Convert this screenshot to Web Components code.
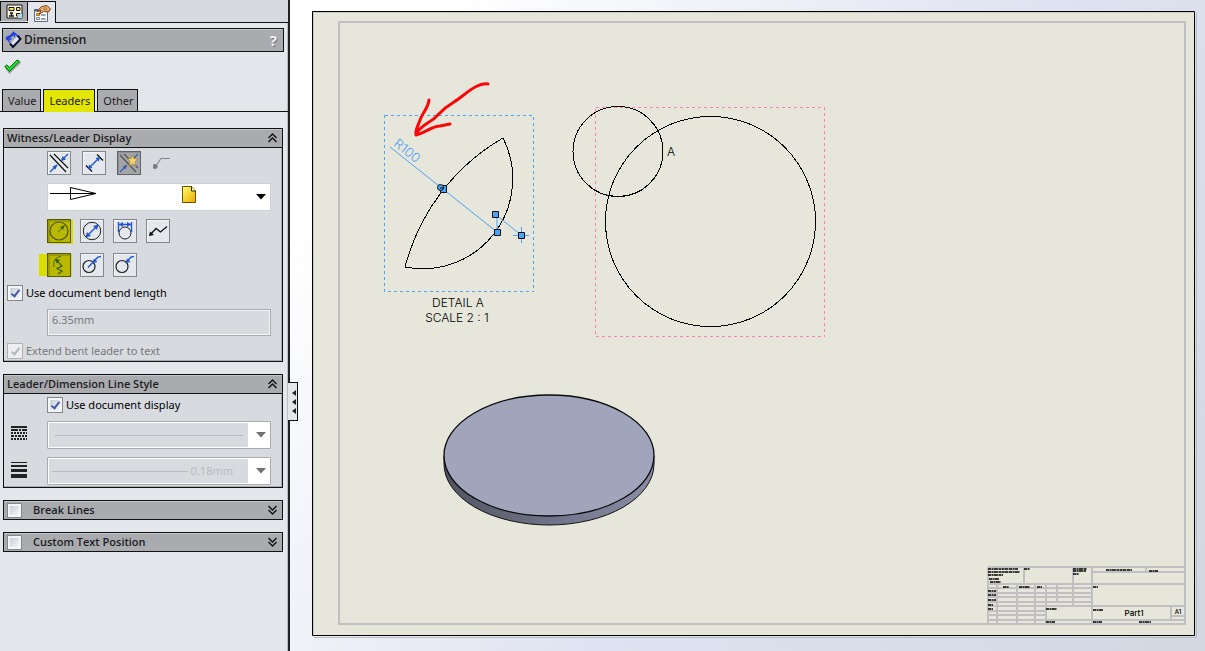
<!DOCTYPE html>
<html lang="en">
<head>
<meta charset="utf-8">
<title>Dimension</title>
<style>
  html, body { margin: 0; height: 100%; }
  body { font: 11px/16px "Noto Sans", "Open Sans", sans-serif; color: #000; }
</style>
</head>
<body>
<cad-app></cad-app>
<script>
const define = (name, html, setup) => {
  const tpl = document.createElement('template');
  tpl.innerHTML = html;
  customElements.define(name, class extends HTMLElement {
    constructor() {
      super();
      this.attachShadow({ mode: 'open' }).append(tpl.content.cloneNode(true));
    }
    connectedCallback() {
      if (setup) setup(this, this.shadowRoot);
    }
  });
};

/* Square tool button; its icon is slotted in */
define('tool-button', `
<style>
  :host { display: block; width: 24px; height: 24px; }
  button { display: block; box-sizing: border-box; width: 24px; height: 24px; padding: 0;
    border: 1px solid #85888b; background: #e4e7eb; box-shadow: inset 1px 1px #f4f5f7; }
  :host([pressed]) button { background: #a3a5a9; border-color: #606266; box-shadow: inset 1px 1px #8d8f93; }
  :host([mark]) button { background: #b8b800; border-color: #55560c; box-shadow: inset 2px 2px #9b9b06, 2px 1px #d9dd00; }
  :host([mark="left"]) button { box-shadow: inset 2px 2px #9b9b06, -9px 0 0 -1px #d9dd00, 2px 0 0 -1px #d9dd00; }
  :host([flat]) button { background: none; border-color: transparent; box-shadow: none; }
</style>
<button type="button"><slot></slot></button>`, (el, root) => {
  const b = root.querySelector('button');
  b.setAttribute('aria-label', el.getAttribute('label'));
  if (el.hasAttribute('pressed') || el.hasAttribute('mark')) b.setAttribute('aria-pressed', 'true');
  b.disabled = el.hasAttribute('disabled');
});

/* Tick box with its label */
define('tick-box', `
<style>
  :host { display: block; }
  label { display: flex; align-items: center; gap: 3px; }
  input { appearance: none; box-sizing: border-box; flex: none; width: 16px; height: 16px; margin: 0;
    border: 1px solid #85888b; background: linear-gradient(135deg, #c9cfd8, #f6f7f8) content-box, #f4f5f6; padding: 2px; display: grid; }
  input:checked::before { content: ""; width: 3px; height: 7px; margin: 0 0 0 3px;
    border: solid #3f5aa0; border-width: 0 2px 2px 0; transform: rotate(38deg); }
  input:disabled { border-color: #b0b2b4; background: #eceeef; }
  input:disabled::before { border-color: #b4b6b8; }
  :host([disabled]) { color: #77797c; }
  :host([bold]) label { gap: 11px; font-weight: 600; color: #1c1c1e; }
  :host([bold]) input { width: 15px; height: 15px; }
</style>
<label><input type="checkbox"><slot></slot></label>`, (el, root) => {
  const i = root.querySelector('input');
  i.checked = el.hasAttribute('checked');
  i.disabled = el.hasAttribute('disabled');
});

/* Drop-down with a line preview drawn over the field */
define('line-combo', `
<style>
  :host { display: grid; height: 28px; }
  select, .over { grid-area: 1 / 1; }
  select { appearance: none; box-sizing: border-box; width: 100%; height: 28px; margin: 0; padding: 0 37px 0 0;
    border: 1px solid #cdd0d3; border-radius: 1px; background: #fff; font: inherit; text-align: right; text-align-last: right; opacity: 1; }
  select:disabled { color: #b9bbbd; border-color: #a9abad; box-shadow: inset 0 0 0 1px #fff;
    background: linear-gradient(90deg, #d7dade calc(100% - 22px), #fff calc(100% - 22px)); }
  .over { display: flex; align-items: center; justify-content: space-between; padding: 0 5px 0 3px; pointer-events: none; z-index: 1; }
  .mark { flex: none; fill: #000; }
  :host([disabled]) .mark { fill: #6f7174; }
</style>
<select></select>
<div class="over"><slot></slot><svg class="mark" width="10" height="6" viewBox="0 0 10 6"><path d="M0 0H10L5 5.500Z"/></svg></div>`,
(el, root) => {
  const s = root.querySelector('select');
  s.setAttribute('aria-label', el.getAttribute('label'));
  s.disabled = el.hasAttribute('disabled');
  s.replaceChildren(new Option(el.getAttribute('value') || '', el.getAttribute('value') || ''));
});

/* Boxed section with a heading bar */
define('group-box', `
<style>
  :host { display: block; border: 1px solid #111; background: #d7dade; box-shadow: inset -1px -1px #a9abad; }
  header { display: flex; align-items: center; box-sizing: border-box; height: 18px; padding: 0 5px 0 3px;
    background: #a9abae; box-shadow: inset 0 1px #c3c5c8; font-family: "Open Sans", sans-serif; }
  :host([open]) header { border-bottom: 1px solid #111; height: 19px; }
  h2 { flex: 1; margin: 0; font: inherit; font-weight: 600; color: #1c1c1e; }
  button { display: block; padding: 0; border: 0; background: none; height: 10px; }
  :host(:not([open])) button svg { transform: scaleY(-1); }
  :host(:not([open])) .body { display: none; }
</style>
<header><h2><slot name="title"></slot></h2>
<button type="button" aria-label="Toggle section"><svg width="9" height="10" viewBox="0 0 9 10" fill="none" stroke="#111" stroke-width="1.400" style="display:block"><path d="M.5 5L4.500 1L8.500 5M.5 9L4.500 5L8.500 9"/></svg></button></header>
<div class="body"><slot></slot></div>`);

/* Property panel on the left */
define('property-panel', `
<style>
  :host { display: block; position: relative; box-sizing: border-box; width: 290px; background: #e3e6ea;
    border-right: 2px solid #222326; box-shadow: inset -1px 0 #b9bbbe; }
  svg { display: block; }
  button { font: inherit; margin: 0; }
  .modes { display: flex; height: 21px; background: #d7dade; border-bottom: 1px solid #111; padding-top: 1px; }
  .modes button { box-sizing: border-box; width: 28px; height: 20px; padding: 2px 0 0 5px; border: 1px solid #111; border-bottom: 0; background: #a9abae; }
  .modes button + button { height: 22px; background: #e3e6ea; border-left: 0; }
  .title { display: flex; align-items: center; box-sizing: border-box; height: 24px; margin: 5px 4px 0 2px; padding: 0 6px 0 2px; gap: 2px;
    border: 1px solid #111; background: #a9abae; box-shadow: inset 0 1px #c3c5c8; }
  h1 { flex: 1; margin: 0; font: 600 12px/16px "Open Sans", sans-serif; color: #1c1c1e; }
  .title button { padding: 0; border: 0; background: none; color: #f2f3f4; font: bold 15px/16px "Noto Sans", sans-serif; text-shadow: 1px 1px #77797c; }
  .ok { display: block; margin: 6px 0 0 4px; padding: 0; border: 0; background: none; }
  .tabs { display: flex; gap: 2px; margin-top: 15px; padding-left: 2px; height: 22px; border-bottom: 1px solid #111; }
  .tabs button { box-sizing: border-box; height: 22px; padding: 0 4px 0 5px; border: 1px solid #111; border-bottom: 0;
    background: #a9abae; line-height: 20px; color: #1c1c1e; }
  .tabs button.on { height: 23px; background: #e3e600; }
  .stack { display: flex; flex-direction: column; gap: 12px; margin: 16px 5px 0 3px; }
  .row { display: flex; gap: 10px; margin-left: 43px; }
  .tools { gap: 9px; }
  .wide { margin: 8px 11px 0 43px; }
  input[type=text] { display: block; box-sizing: border-box; width: 100%; height: 27px; margin: 0; padding: 0 4px 6px; border: 1px solid #a9abad;
    background: #d7dade; box-shadow: inset 0 0 0 1px #f4f5f6; font: inherit; color: #77797c; }
  .pick { display: grid; grid-template-columns: 43px 1fr; align-items: start; margin: 8px 11px 0 0; }
  .pick > svg { margin: 4px 0 0 7px; }
  .line { flex: 1; border-top: 1px solid #b9bbbd; margin: 0 13px 0 5px; }
  .line.short { margin-right: 68px; margin-left: 2px; }
  .grip { position: absolute; left: 288px; top: 382px; box-sizing: border-box; width: 10px; height: 39px; padding: 0 0 0 4px;
    border: 1px solid #111; border-left: 0; background: #e3e6ea; }
</style>
<nav class="modes">
  <button type="button" aria-label="Feature tree"><svg width="17" height="17" viewBox="0 0 17 17"><path d="M1 1H16V14H1Z" fill="#fffbe6" stroke="#111"/><path d="M3 3.500h5v3H3zM10.500 3.500h3.500v3h-3.500zM10.500 9.500h3.500v2.500h-3.500z" fill="#ffe45c" stroke="#111"/><path d="M4 9h3M5.500 9v3M3 12h5" stroke="#111" stroke-width="1.500"/><path d="M12 10h4v4h-4z" fill="#a9dcf2"/></svg></button>
  <button type="button" aria-label="Properties"><svg width="18" height="18" viewBox="0 0 18 18"><path d="M1.500 4.500h13v12h-13z" fill="#f7f8fa" stroke="#5d6b7d"/><path d="M1.500 4.500h8v2h-8z" fill="#56657a"/><path d="M3.500 8.500h3v2h-3z" fill="#f4a32b" stroke="#b9700e"/><path d="M3.500 12.500h3v2h-3z" fill="#eee" stroke="#888"/><path d="M8 10h4.500M8 14h4.500" stroke="#7d8794" stroke-width="1.400"/><path d="M4 6.500L8.500 1.500L14 .5L17.500 4L15.500 7L10.500 6.500L6.500 9L8 5Z" fill="#e9ac6c" stroke="#7a4518"/><path d="M10 4l4 1M11 2.800l3 .5" stroke="#8a5424" stroke-width=".6"/></svg></button>
</nav>
<div class="title">
  <svg width="17" height="18" viewBox="0 0 17 18"><path d="M6 12L13 4.500L16 7.500L8.500 15.500Z" fill="#dfe6f5"/><path d="M5 12.500L8 16L15.500 8L12.500 4.500" fill="none" stroke="#101030" stroke-width="2"/><path d="M1 9L9 1M1 6L5 11.500M8 1l5 4M3 7.500L9.500 3M2.500 8h4M3 8.500V4.500M10 3H6.500M9.500 2.500V6" fill="none" stroke="#1f3fe0" stroke-width="1.300"/></svg>
  <h1>Dimension</h1>
  <button type="button" aria-label="Help">?</button>
</div>
<button class="ok" type="button" aria-label="OK"><svg width="17" height="16" viewBox="0 0 17 16"><path d="M2 10l3.500 4.500L16.500 4" fill="none" stroke="#9fa3a6" stroke-width="2"/><path d="M.8 8.500L3 6.800L5.500 9.500L13 2L15.500 3.200L5.500 13.500Z" fill="#25d829" stroke="#076d0d"/></svg></button>
<div class="tabs" role="tablist">
  <button type="button" role="tab">Value</button>
  <button type="button" role="tab" class="on" aria-selected="true">Leaders</button>
  <button type="button" role="tab">Other</button>
</div>
<div class="stack">
  <group-box open>
    <span slot="title">Witness/Leader Display</span>
    <div class="row" style="gap:11px; margin-top:3px">
      <tool-button label="Outside"><svg width="22" height="22" viewBox="0 0 22 22" fill="none"><path d="M2 3L18 20M6 2L20 16" stroke="#111" stroke-width="1.200"/><path d="M2 20L9 13M20 2L14 8" stroke="#2158cf" stroke-width="1.400"/><path d="M4.500 14.500L9.500 12.500L7.500 17.500ZM13 9L14.500 4L18 7.500Z" fill="#2158cf"/></svg></tool-button>
      <tool-button label="Inside"><svg width="22" height="22" viewBox="0 0 22 22" fill="none"><path d="M14 2.500L20 8.500M3 13.500L9 19.500" stroke="#111" stroke-width="1.300"/><path d="M7 15L16 6" stroke="#2158cf" stroke-width="1.400"/><path d="M5 17L6 12.500L9.500 16ZM17 5L12.500 6L16 9.500Z" fill="#2158cf"/></svg></tool-button>
      <tool-button label="Smart" pressed><svg width="22" height="22" viewBox="0 0 22 22" fill="none"><path d="M2 3L18 20M6 2L20 16" stroke="#555" stroke-width="1.200"/><path d="M2 20L8 14M20 2L16 6" stroke="#3c5fae" stroke-width="1.400"/><path d="M4.500 14.500L9.500 12.500L7.500 17.500Z" fill="#3c5fae"/><path d="M14.500 3L16 6.500L20 7L17 9.800L18 14L14.500 11.800L11 14L12 9.800L9.500 7L13 6.500Z" fill="#f3d173" stroke="#a3853c" stroke-width=".8"/></svg></tool-button>
      <tool-button label="Directed leader" flat disabled><svg width="22" height="22" viewBox="0 0 22 22" fill="none" stroke="#85888b"><path d="M2 15L8 6.500H17" stroke-width="1.200"/><circle cx="2" cy="14.500" r="2.200" fill="#77797c"/></svg></tool-button>
    </div>
    <line-combo class="wide" label="Arrow style">
      <svg width="48" height="14" viewBox="0 0 48 14" fill="none" stroke="#000" style="margin-bottom:8px"><path d="M0 7.500H46M20.500 1.500V13.500L46 7.500Z"/></svg>
      <svg width="15" height="17" viewBox="0 0 15 17" style="margin:0 11px 6px 36px"><defs><linearGradient id="n" x2="1" y2="1"><stop stop-color="#ffff6a"/><stop offset="1" stop-color="#eaa900"/></linearGradient></defs><path d="M.5.5H9.500L13.500 5V16.500H.5Z" fill="url(#n)" stroke="#6b5300"/><path d="M9.500.5V5H13.500" fill="#fff7b0" stroke="#222"/></svg>
    </line-combo>
    <div class="row tools" style="margin-top:8px">
      <tool-button label="Radius" mark="right"><svg width="22" height="22" viewBox="0 0 22 22" fill="none" stroke="#4e6a1e"><circle cx="11" cy="11" r="9" stroke="#4d4f14" stroke-width="1.200"/><path d="M10 12L14.500 7.500"/><path d="M17 5L12 7L15 10Z" fill="#3f6a2a" stroke="none"/></svg></tool-button>
      <tool-button label="Diameter"><svg width="22" height="22" viewBox="0 0 22 22" fill="none"><circle cx="11" cy="11" r="8.700" stroke="#222"/><path d="M6 16L16 6" stroke="#2158cf" stroke-width="1.500"/><path d="M4.500 17.500L6 12L10 16ZM17.500 4.500L12 6L16 10Z" fill="#2158cf"/></svg></tool-button>
      <tool-button label="Linear"><svg width="22" height="22" viewBox="0 0 22 22" fill="none"><circle cx="11" cy="13" r="6" stroke="#222"/><path d="M4.500 2V12M17.500 2V12M5 4.500H17" stroke="#2158cf" stroke-width="1.400"/><path d="M5 4.500L9 2V7ZM17 4.500L13 2V7Z" fill="#2158cf"/></svg></tool-button>
      <tool-button label="Multi-jog leader"><svg width="22" height="22" viewBox="0 0 22 22" fill="none"><path d="M3 15L9 8.500L13.500 12L20 6.500" stroke="#111" stroke-width="1.300"/><path d="M2 16L3 11.500L7 15Z" fill="#111"/></svg></tool-button>
    </div>
    <div class="row tools" style="margin-top:10px">
      <tool-button label="Foreshortened" mark="left"><svg width="22" height="22" viewBox="0 0 22 22" fill="none"><path d="M6 13C5 6 8 3 13 2.500" stroke="#5a5b10"/><path d="M8 6L14 12L9 14.500L14 17L10 20" stroke="#3c5a18" stroke-width="1.200"/><path d="M7 4.500L12 6L8.500 9.500Z" fill="#3c5a18"/></svg></tool-button>
      <tool-button label="Solid leader, aligned text"><svg width="22" height="22" viewBox="0 0 22 22" fill="none"><circle cx="8" cy="12.500" r="6" stroke="#222" stroke-width="1.200"/><path d="M7 13.500L16 4Q17 2.500 20 2.500" stroke="#2158cf" stroke-width="1.400"/><path d="M11.500 9L13 4.500L16.500 8Z" fill="#2158cf"/></svg></tool-button>
      <tool-button label="Broken leader"><svg width="22" height="22" viewBox="0 0 22 22" fill="none"><circle cx="8" cy="12.500" r="6" stroke="#222" stroke-width="1.200"/><path d="M13 7.500L16 4Q17 2.500 20 2.500" stroke="#2158cf" stroke-width="1.400"/><path d="M11.500 9L13 4.500L16.500 8Z" fill="#2158cf"/></svg></tool-button>
    </div>
    <tick-box checked style="margin:8px 0 0 3px">Use document bend length</tick-box>
    <div class="wide"><input type="text" aria-label="Bend length" value="6.35mm" disabled></div>
    <tick-box checked disabled style="margin:7px 0 2px 3px">Extend bent leader to text</tick-box>
  </group-box>
  <group-box open>
    <span slot="title">Leader/Dimension Line Style</span>
    <tick-box checked style="margin:3px 0 0 43px">Use document display</tick-box>
    <div class="pick">
      <svg width="16" height="16" viewBox="0 0 16 16" stroke="#222" stroke-width="2"><path d="M0 2H16"/><path d="M0 5H16" stroke-dasharray="7 1 2 1"/><path d="M0 8H16M0 14H16" stroke-dasharray="2 1"/><path d="M0 11H16" stroke-dasharray="3 1 2 1"/></svg>
      <line-combo label="Line style" disabled><span class="line"></span></line-combo>
    </div>
    <div class="pick" style="margin-bottom:2px">
      <svg width="16" height="18" viewBox="0 0 16 18" fill="#222"><path d="M0 1h16v1H0zM0 4h16v2H0zM0 8h16v3H0zM0 13h16v4H0z"/></svg>
      <line-combo label="Line thickness" value="0.18mm" disabled><span class="line short"></span></line-combo>
    </div>
  </group-box>
  <group-box><tick-box slot="title" bold>Break Lines</tick-box></group-box>
  <group-box><tick-box slot="title" bold>Custom Text Position</tick-box></group-box>
</div>
<button class="grip" type="button" aria-label="Collapse panel"><svg width="4" height="24" viewBox="0 0 4 24" fill="#222"><path d="M4 0V6L0 3ZM4 9V15L0 12ZM4 18V24L0 21Z"/></svg></button>`);

/* Drawing sheet with its views */
define('drawing-sheet', `
<style>
  :host { display: block; min-width: 0; background: linear-gradient(125deg, #fff 0%, #fff 12%, #dfe3f1 55%, #d3d7e2 100%); }
  svg { display: block; width: 100%; height: 100%; }
  text { font-family: Inter, Lato, sans-serif; font-size: 12px; font-weight: 300; fill: #000; text-anchor: middle; }
</style>
<svg viewBox="290 0 915 651" fill="none" role="img" aria-label="Drawing sheet">
  <defs><linearGradient id="side"><stop stop-color="#50535f"/><stop offset=".3" stop-color="#646777"/><stop offset=".6" stop-color="#747890"/><stop offset="1" stop-color="#8a8da3"/></linearGradient></defs>
  <path d="M314 637.500H1196.500V13" stroke="#b9bcc4"/>
  <path d="M312.500 11.500H1194.500V635.500H312.500Z" fill="#e6e6da" stroke="#000"/>
  <path d="M313.500 634.500V12.500H1193.500" stroke="#c9cac2"/>
  <g stroke="#c0c0c2" stroke-width="2">
    <path d="M339 22H1185V624H339Z"/>
    <path d="M988 567H1184M988 584H1184M1092 572H1184M988 588H1092M988 593H1092M988 597H1092M988 602H1092M988 606H1184M988 611H1046M988 615H1046M988 620H1184M1171 616H1184"/>
    <path d="M988 567V624M1024 567V584M1073 567V606M1092 567V624M997 584V624M1017 584V624M1035 584V624M1046 584V624M1057 584V602M1146 567V572M1171 606V620"/>
  </g>
  <g stroke="#000" stroke-width="1.500" stroke-dasharray="3 .5 2 .4 4 .6">
    <path d="M988 569H1018M988 572H1020M988 575H1003M989 579H999M990 582H1001M1024 569H1030M1073 569H1087M1073 571H1086M1073 574H1079M1106 570H1132M1149 571H1158M1003 587H1009M1019 587H1030M1037 587H1042M1093 587H1098M988 591H996M988 595H996M988 600H996M988 605H993M988 609H993M1046 609H1057M1093 610H1103M1046 622H1055M1093 622H1102M1139 622H1151"/>
  </g>
  <text x="1134" y="616" style="font-size:8px;font-weight:500">Part1</text>
  <text x="1178" y="614" style="font-size:6px;font-weight:500">A1</text>
  <g shape-rendering="crispEdges">
    <path d="M384.500 115.500H533.500V291.500H384.500Z" stroke="#4da3f7" stroke-dasharray="3 3"/>
    <path d="M595.500 107.500H824.500V336.500H595.500Z" stroke="#ff7fb6" stroke-dasharray="3 3"/>
  </g>
  <g stroke="#000" shape-rendering="crispEdges">
    <circle cx="618" cy="151.500" r="45"/>
    <circle cx="710.500" cy="221.500" r="105"/>
    <path d="M405 267A210 210 0 0 1 503 138A90 90 0 0 1 405 267Z"/>
  </g>
  <text x="671" y="156">A</text>
  <text x="458" y="307">DETAIL A</text>
  <text x="457" y="322">SCALE 2 : 1</text>
  <path d="M390 147L497 232V218M495 214L521 235M513 235.500H529M521.500 227V243" stroke="#4da3f7"/>
  <text transform="translate(390 147) rotate(38)" x="1" y="-3" style="font-size:13px;text-anchor:start;fill:#4da3f7">R100</text>
  <g fill="#4da3f7" stroke="#111">
    <path d="M440.500 185.500h6v7h-6zM492.500 211.500h6v6h-6zM494.500 229.500h6v6h-6zM518.500 232.500h6v6h-6z"/>
    <circle cx="440.500" cy="187.500" r="3"/><path d="M440 188h4"/>
  </g>
  <path d="M488 84C477 82 465 95 454 102C437 112 439 117 429 122C423 126 418 129 416 134M429 100C428 109 422 113 420 120C418 126 415 130 416 135C425 133 432 126 440 126L450 124" stroke="#f80808" stroke-width="3" stroke-linecap="round" stroke-linejoin="round"/>
  <path d="M444 456V464A105 61 0 0 0 654 464V456Z" fill="url(#side)" stroke="#111"/>
  <ellipse cx="549" cy="455.500" rx="105" ry="60.500" fill="#a1a5bb" stroke="#0a0a0a" stroke-width="1.300"/>
</svg>`);

define('cad-app', `
<style>
  :host { display: grid; grid-template-columns: auto 1fr; min-height: 100vh; overflow: hidden; }
  drawing-sheet { height: 100vh; }
</style>
<property-panel></property-panel>
<drawing-sheet></drawing-sheet>`);
</script>
</body>
</html>
